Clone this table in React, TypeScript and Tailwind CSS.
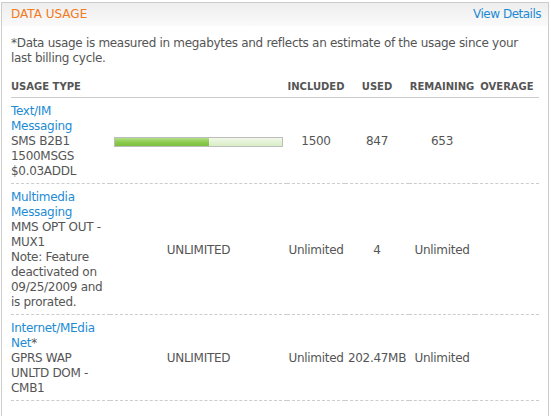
import React from 'react'

const font = "font-['DejaVu_Sans','Verdana',sans-serif]"

type Row = {
  name: string
  nameSuffix?: string
  lines: string[]
  plan: 'bar' | string
  included: string
  used: string
  remaining: string
  overage: string
}

const rows: Row[] = [
  {
    name: 'Text/IM Messaging',
    lines: ['SMS B2B1 1500MSGS $0.03ADDL'],
    plan: 'bar',
    included: '1500',
    used: '847',
    remaining: '653',
    overage: '',
  },
  {
    name: 'Multimedia Messaging',
    lines: ['MMS OPT OUT - MUX1', 'Note: Feature deactivated on 09/25/2009 and is prorated.'],
    plan: 'UNLIMITED',
    included: 'Unlimited',
    used: '4',
    remaining: 'Unlimited',
    overage: '',
  },
  {
    name: 'Internet/MEdia Net',
    nameSuffix: '*',
    lines: ['GPRS WAP UNLTD DOM - CMB1'],
    plan: 'UNLIMITED',
    included: 'Unlimited',
    used: '202.47MB',
    remaining: 'Unlimited',
    overage: '',
  },
]

function UsageBar({ used, total }: { used: number; total: number }) {
  const pct = (used / total) * 100
  return (
    <div className="mx-auto h-[10px] w-[169px] border border-[#bdbdbd] bg-gradient-to-b from-[#f1f8e9] to-[#d9eec4]">
      <div
        className="h-full bg-gradient-to-b from-[#b5df86] via-[#8ccb4e] to-[#7bbf3c]"
        style={{ width: `${pct}%` }}
      />
    </div>
  )
}

export default function App() {
  const cell = 'border-b border-dashed border-[#cccccc] pt-[6px] pb-[4px] align-middle text-center'
  const head = 'pb-[4px] text-[10px] font-bold leading-[13px] tracking-normal text-[#555] text-center border-b border-[#cccccc]'

  return (
    <div className={`${font} h-screen w-full bg-white pt-[2px] pl-[1px] pr-[2px] text-[12px] leading-[15px] tracking-[-0.3px] text-[#555]`}>
      <div className="flex h-full flex-col border-x border-t border-[#cccccc]">
        {/* header */}
        <div className="flex h-[23px] items-center justify-between bg-gradient-to-b from-[#eeeeee] to-[#fafafa] pl-[9px] pr-[7px]">
          <span className="text-[12px] tracking-normal text-[#f47a20]">DATA USAGE</span>
          <a className="text-[12px] tracking-[-0.5px] text-[#1d8bd4]">View Details</a>
        </div>

        <div className="px-[9px] pt-[10px]">
          <p>
            *Data usage is measured in megabytes and reflects an estimate of the usage since your last billing cycle.
          </p>

          <table className="mt-[14px] w-[528px] table-fixed border-collapse">
            <colgroup>
              <col className="w-[99px]" />
              <col className="w-[177px]" />
              <col className="w-[58px]" />
              <col className="w-[64px]" />
              <col className="w-[66px]" />
              <col className="w-[64px]" />
            </colgroup>
            <thead>
              <tr>
                <th className={`${head} !text-left`}>USAGE TYPE</th>
                <th className={head}></th>
                <th className={head}>INCLUDED</th>
                <th className={head}>USED</th>
                <th className={head}>REMAINING</th>
                <th className={head}>OVERAGE</th>
              </tr>
            </thead>
            <tbody>
              {rows.map((r) => (
                <tr key={r.name}>
                  <td className={`${cell} !text-left pr-[2px]`}>
                    <a className="text-[#1d8bd4]">
                      {r.name}
                      {r.nameSuffix && <span className="text-[#555]">{r.nameSuffix}</span>}
                    </a>
                    {r.lines.map((l) => (
                      <div key={l}>{l}</div>
                    ))}
                  </td>
                  <td className={cell}>
                    {r.plan === 'bar' ? <UsageBar used={847} total={1500} /> : r.plan}
                  </td>
                  <td className={cell}>{r.included}</td>
                  <td className={cell}>{r.used}</td>
                  <td className={cell}>{r.remaining}</td>
                  <td className={cell}>{r.overage}</td>
                </tr>
              ))}
            </tbody>
          </table>
        </div>
      </div>
    </div>
  )
}
